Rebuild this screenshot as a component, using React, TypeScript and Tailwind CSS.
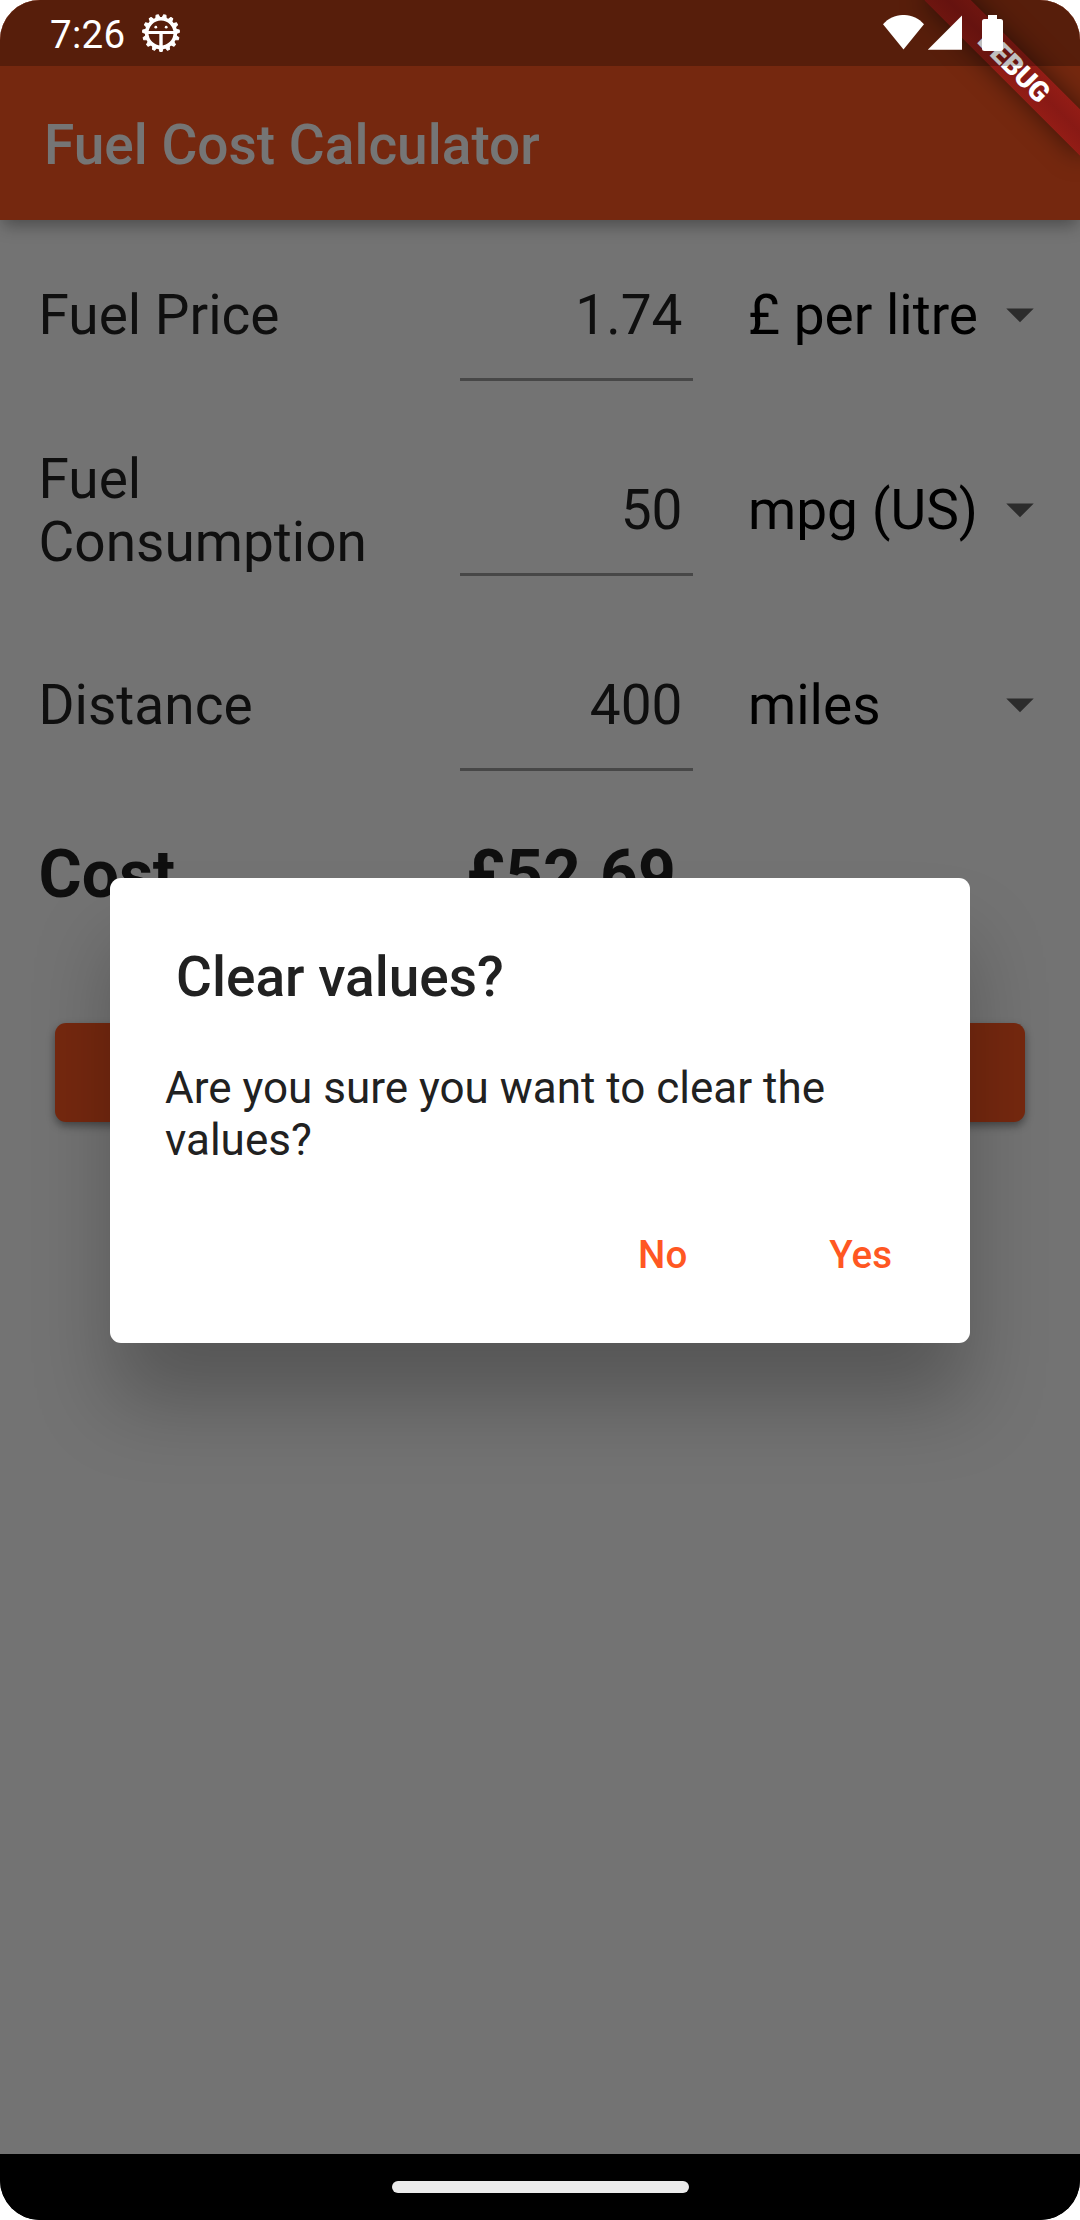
const TEETH = Array.from({ length: 15 }, (_, i) => i * 24);

function StatusBar() {
  return (
    <div className="absolute inset-x-0 top-0 z-30 flex h-[66px] items-start justify-between bg-black/25 pr-[77px] pl-[50px] text-white">
      <div className="flex gap-[16px] pt-3">
        <span className="text-[38.5px] leading-[45px] tracking-[0.3px]">7:26</span>
        <svg className="mt-px size-10" viewBox="-20 -20 40 40" fill="none" stroke="white">
          {TEETH.map((angle) => (
            <path key={angle} d="M-2.4 14 L-1.1 18.4 H1.1 L2.4 14Z" fill="white" strokeWidth="1.1" strokeLinejoin="round" transform={`rotate(${angle})`} />
          ))}
          <circle r="14.3" strokeWidth="3.6" />
          <path d="M-13 -0.4 H13" strokeWidth="3" />
          <path d="M0 0 V14" strokeWidth="3.4" />
          <circle cx="-5.2" cy="-5.8" r="1.4" fill="white" stroke="none" />
          <circle cx="5.2" cy="-5.8" r="1.4" fill="white" stroke="none" />
        </svg>
      </div>
      <div className="flex pt-[15px]">
        <svg className="h-9 w-[41px]" viewBox="0 0 41 36" fill="white">
          <path d="M0 9.2 C11 -3.1 30 -3.1 41 9.2 L20.5 34.5Z" />
        </svg>
        <svg className="ml-[4px] h-9 w-[35px]" viewBox="0 0 35 36" fill="white">
          <path d="M34 0.5 V34.8 H-0.3Z" />
        </svg>
        <svg className="ml-[19px] h-9 w-[21px]" viewBox="0 0 21 36" fill="white">
          <path d="M6 0 H15 V4 H18.5 Q21 4 21 6.5 V33.5 Q21 36 18.5 36 H2.5 Q0 36 0 33.5 V6.5 Q0 4 2.5 4 H6Z" />
        </svg>
      </div>
    </div>
  );
}

function DebugBanner() {
  return (
    <div className="absolute top-[49.5px] left-[904px] z-20 flex h-[33px] w-[220px] rotate-45 items-center justify-center bg-linear-to-b from-[#9e1818]/73 via-[#8d1616]/81 to-[#9e1818]/73 pt-px text-[28px] leading-none font-black tracking-[-0.4px] text-white shadow-[0_0_26px_rgba(0,0,0,0.5)]">
      DEBUG
    </div>
  );
}

function FieldRow({ label, value, unit }: { label: string; value: string; unit: string }) {
  return (
    <div className="flex h-[134px] text-[55px]">
      <div className="flex w-[421px] items-center pt-[3px] pr-10 leading-[63px] text-black/87">{label}</div>
      <div className="w-[233px] border-b-3 border-black/38 pt-[36px] pr-[10px] text-right leading-[64px] text-black/87">
        {value}
      </div>
      <div className="flex flex-1 items-center justify-between pl-[55.5px] text-black">
        <span className="pt-[3px] leading-[63px] whitespace-nowrap">{unit}</span>
        <svg className="-ml-4 size-[66px] shrink-0" viewBox="0 0 24 24" fill="#616161">
          <path d="M7 10l5 5 5-5z" />
        </svg>
      </div>
    </div>
  );
}

function ClearDialog() {
  return (
    <div className="absolute inset-0 z-10 flex items-center justify-center bg-black/54 pt-[66px]">
      <div className="flex h-[465px] w-[860px] flex-col rounded-[11px] bg-white px-[55px] pt-[67.5px] text-[#212121] shadow-[0_62px_80px_-4px_rgba(0,0,0,0.25)]">
        <h2 className="pl-[11px] text-[55px] leading-[64px] font-medium">Clear values?</h2>
        <p className="pt-[53px] text-[44px] leading-[52px]">Are you sure you want to clear the values?</p>
        <div className="flex justify-end gap-[142px] pt-[66px] pr-[23px] text-[38.5px] leading-[45px] font-medium text-[#ff5722]">
          <button>No</button>
          <button>Yes</button>
        </div>
      </div>
    </div>
  );
}

export default function App() {
  return (
    <div className="h-[2220px] w-[1080px] bg-white font-['Roboto',sans-serif]">
      <div className="relative flex h-full flex-col overflow-hidden rounded-[40px] bg-black">
        <div className="relative flex flex-1 flex-col overflow-hidden bg-[#fafafa]">
          <header className="flex h-[220px] items-center bg-[#ff5722] pt-[70px] pl-[44px] shadow-[0_8px_16px_-3px_rgba(0,0,0,0.35)]">
            <h1 className="text-[55px] leading-[64px] font-medium text-white">Fuel Cost Calculator</h1>
          </header>
          <main className="pt-[27px] pr-[27px] pl-[38.5px]">
            <div className="flex flex-col gap-[61.2px]">
              <FieldRow label="Fuel Price" value="1.74" unit="£ per litre" />
              <FieldRow label="Fuel Consumption" value="50" unit="mpg (US)" />
              <FieldRow label="Distance" value="400" unit="miles" />
            </div>
            <div className="flex pt-[64.6px] text-[66px] leading-[77px] font-bold text-black/87">
              <span className="w-[427.5px]">Cost</span>
              <span>£52.69</span>
            </div>
            <div className="px-[16.5px] pt-[110px]">
              <button aria-label="Clear" className="block h-[99px] w-[970px] rounded-[11px] bg-[#ff5722] shadow-[0_4px_8px_rgba(0,0,0,0.4)]" />
            </div>
          </main>
          <ClearDialog />
        </div>
        <footer className="flex h-[66px] shrink-0 items-start justify-center bg-black pt-[27px]">
          <div className="h-3 w-[297px] rounded-full bg-[#ebebeb]" />
        </footer>
        <DebugBanner />
        <StatusBar />
      </div>
    </div>
  );
}
